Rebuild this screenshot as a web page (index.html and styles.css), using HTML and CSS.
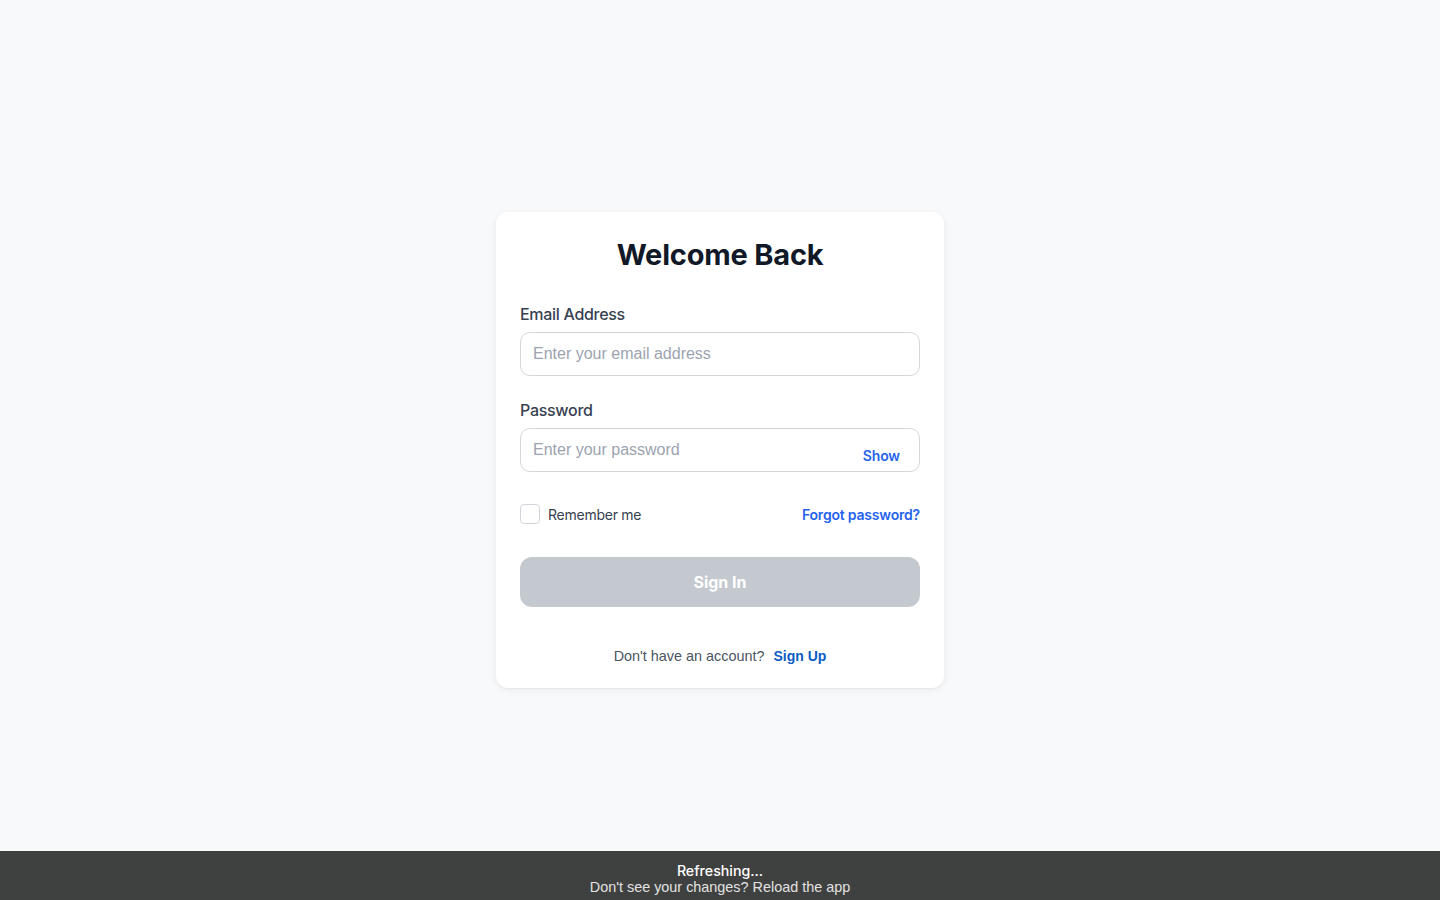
FILE: index.html
```html
<!DOCTYPE html>
<html lang="en">
<head>
<meta charset="utf-8">
<title>Welcome Back</title>
<link rel="stylesheet" href="styles.css">
</head>
<body>
<main class="page">
  <form class="card">
    <h1 class="title">Welcome Back</h1>
    <div class="field">
      <label class="label" for="email">Email Address</label>
      <input class="input" id="email" type="email" placeholder="Enter your email address">
    </div>
    <div class="field">
      <label class="label" for="pw">Password</label>
      <div class="input-wrap">
        <input class="input" id="pw" type="password" placeholder="Enter your password">
        <span class="show">Show</span>
      </div>
    </div>
    <div class="row">
      <label class="remember"><span class="checkbox"></span>Remember me</label>
      <a class="forgot" href="#">Forgot password?</a>
    </div>
    <button class="btn" type="button">Sign In</button>
    <p class="footer">Don't have an account? <a class="signup" href="#">Sign Up</a></p>
  </form>
</main>
<div class="bar">
  <div class="bar-title">Refreshing...</div>
  <div class="bar-sub">Don't see your changes? Reload the app</div>
</div>
</body>
</html>
```
FILE: styles.css
```css
* { box-sizing: border-box; }
html, body { margin: 0; height: 100%; }
body {
  background: #f8f9fb;
  font-family: Inter, "Liberation Sans", sans-serif;
  display: flex;
  flex-direction: column;
}
.page {
  flex: 1;
  display: flex;
  justify-content: center;
  padding-top: 212px;
}
.card {
  width: 448px;
  height: 476px;
  background: #fff;
  border-radius: 12px;
  box-shadow: 0 2px 8px rgba(0,0,0,0.06), 0 1px 2px rgba(0,0,0,0.04);
  padding: 24px 24px 0;
  display: flex;
  flex-direction: column;
}
.title {
  margin: 0 0 30px;
  font-size: 29px;
  line-height: 38px;
  font-weight: 700;
  color: #111827;
  text-align: center;
  letter-spacing: -0.2px;
}
.field { display: flex; flex-direction: column; margin-bottom: 24px; }
.label {
  font-size: 16px;
  line-height: 20px;
  font-weight: 500;
  color: #374151;
  margin-bottom: 8px;
  letter-spacing: -0.3px;
}
.input {
  width: 100%;
  height: 44px;
  border: 1px solid #d4d6dc;
  border-radius: 10px;
  padding: 0 12px;
  font-family: "Liberation Sans", Arial, sans-serif;
  font-size: 16px;
  color: #111827;
  background: #fff;
  outline: none;
}
.input::placeholder { color: #9ca3af; }
.input-wrap { position: relative; }
.show {
  position: absolute;
  right: 20px;
  top: 20px;
  font-size: 14px;
  line-height: 16px;
  font-weight: 600;
  color: #2563eb;
  letter-spacing: -0.1px;
}
.row {
  margin-top: 8px;
  display: flex;
  justify-content: space-between;
  align-items: center;
  height: 20px;
}
.remember {
  display: flex;
  align-items: center;
  gap: 8px;
  font-size: 14px;
  color: #374151;
  letter-spacing: -0.25px;
}
.checkbox {
  width: 20px;
  height: 20px;
  border: 1.5px solid #d1d5db;
  border-radius: 4px;
  background: #fff;
}
.forgot {
  font-size: 14px;
  font-weight: 600;
  color: #2563eb;
  text-decoration: none;
  letter-spacing: -0.2px;
}
.btn {
  margin-top: 33px;
  height: 50px;
  border: none;
  border-radius: 12px;
  background: #c4c8cf;
  color: #fff;
  font-family: Inter, sans-serif;
  font-size: 16px;
  font-weight: 700;
}
.footer {
  margin: 39px 0 0;
  text-align: center;
  font-family: "Liberation Sans", Arial, sans-serif;
  font-size: 14.4px;
  line-height: 20px;
  color: #4b5563;
}
.signup {
  margin-left: 5px;
  font-weight: 700;
  font-size: 14px;
  color: #0b5cc5;
  text-decoration: none;
}
.bar {
  height: 49px;
  background: #3f4140;
  text-align: center;
  padding-top: 11px;
  font-family: "Liberation Sans", Arial, sans-serif;
  font-size: 14.4px;
  line-height: 17px;
}
.bar-title { color: #fff; font-weight: 500; font-family: Inter, sans-serif; font-size: 14.2px; }
.bar-sub { color: #e2e2e2; }
```
